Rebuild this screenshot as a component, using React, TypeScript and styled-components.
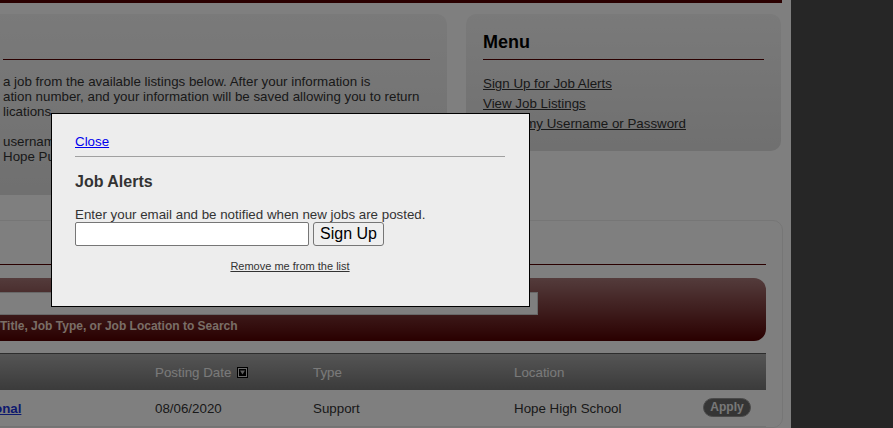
import React from "react";
import styled, { createGlobalStyle } from "styled-components";

const GlobalStyle = createGlobalStyle`
  html, body {
    margin: 0;
    padding: 0;
  }
  body {
    background: #4c4c4c;
    font-family: "Liberation Sans", Arial, sans-serif;
    font-size: 13.33px;
    color: #333;
    height: 428px;
    overflow: hidden;
  }
`;

const Site = styled.div`
  width: 791px;
  height: 428px;
  background: #fff;
  overflow: hidden;
`;

const TopBar = styled.div`
  height: 3px;
  margin-right: 9px;
  background: #540000;
`;

const Columns = styled.div`
  display: flex;
  align-items: flex-start;
  gap: 19px;
  margin: 11px 10px 0 -14px;
`;

const Panel = styled.section<{ $width: number; $bottom: number }>`
  box-sizing: border-box;
  width: ${(p) => p.$width}px;
  padding: 18px 17px ${(p) => p.$bottom}px;
  border-radius: 10px;
  background: linear-gradient(#f4f4f4, #e0e0e0);
`;

const PanelTitle = styled.h2`
  height: 21px;
  margin: 0;
  padding-bottom: 6px;
  border-bottom: 1px solid #550000;
  font-size: 18px;
  line-height: 21px;
  font-weight: bold;
  color: #000;
`;

const Intro = styled.p`
  margin: 14px 0 0;
  line-height: 15px;
  white-space: nowrap;
  & + & {
    margin-top: 15px;
  }
`;

const MenuList = styled.ul`
  list-style: none;
  margin: 14px 0 0;
  padding: 0;
  line-height: 20px;
  a {
    color: #333;
    text-decoration: underline;
  }
`;

const ListingsPanel = styled.section`
  margin: 25px 8px 0 -14px;
  padding: 0 16px 0 0;
  border: 1px solid #ececec;
  border-radius: 10px;
  background: #fff;
`;

const ListingsHeader = styled.div`
  height: 43px;
  border-bottom: 1px solid #550000;
`;

const SearchBar = styled.div`
  margin-top: 13px;
  height: 63px;
  box-sizing: border-box;
  padding: 14px 0 0 3px;
  border-radius: 12px;
  background: linear-gradient(#a87878, #540000);
`;

const SearchInput = styled.input`
  display: block;
  box-sizing: border-box;
  width: 548px;
  height: 23px;
  border: 1px solid #d0d0d0;
  background: #fff;
`;

const SearchHint = styled.div`
  margin-top: 4px;
  padding-left: 10px;
  font-size: 12px;
  line-height: 14px;
  font-weight: bold;
  color: #f2dccd;
  white-space: nowrap;
`;

const Grid = styled.div`
  display: grid;
  grid-template-columns: 168px 158px 201px 189px 1fr;
  align-items: center;
  height: 36px;
  & > :first-child {
    padding-left: 7px;
  }
`;

const TableHead = styled(Grid)`
  margin-top: 12px;
  border-top: 1px solid #5a5a5a;
  background: linear-gradient(#aaaaaa, #767676);
  color: #f4f4f4;
`;

const TableRow = styled(Grid)`
  border-bottom: 1px solid #e6e6e6;
  color: #333;
`;

const HeadCell = styled.div`
  display: flex;
  align-items: center;
  gap: 6px;
  white-space: nowrap;
`;

const JobLink = styled.a`
  font-weight: bold;
  color: #1a33dd;
  text-decoration: underline;
  white-space: nowrap;
`;

const ApplyButton = styled.button`
  width: 48px;
  height: 19px;
  padding: 0;
  border: 1px solid #949494;
  border-radius: 10px;
  background: #6a6a6a;
  color: #f0f0f0;
  font-family: "Liberation Sans", Arial, sans-serif;
  font-size: 12px;
  font-weight: bold;
  margin-top: -3px;
`;

const Overlay = styled.div`
  position: fixed;
  inset: 0;
  background: rgba(0, 0, 0, 0.5);
`;

const Modal = styled.div`
  position: fixed;
  left: 51px;
  top: 113px;
  width: 479px;
  height: 194px;
  box-sizing: border-box;
  padding: 20px 24px 0 23px;
  border: 1px solid #000;
  background: #ededed;
  color: #333;
  font-size: 13.33px;
`;

const CloseLink = styled.a`
  color: #0000ee;
  text-decoration: underline;
`;

const Rule = styled.div`
  height: 1px;
  margin-top: 7px;
  background: #a0a0a0;
`;

const ModalTitle = styled.h3`
  margin: 16px 0 0;
  font-size: 16px;
  font-weight: bold;
  line-height: normal;
`;

const ModalText = styled.p`
  margin: 16px 0 0;
`;

const SignUpForm = styled.form`
  display: flex;
  gap: 4px;
`;

const EmailInput = styled.input`
  box-sizing: border-box;
  width: 234px;
  height: 24px;
  border: 1px solid #767676;
  border-radius: 2px;
  background: #fff;
`;

const SignUpButton = styled.button`
  box-sizing: border-box;
  height: 24px;
  padding: 0 6px;
  border: 1px solid #767676;
  border-radius: 3px;
  background: #efefef;
  color: #000;
  font-family: "Liberation Sans", Arial, sans-serif;
  font-size: 16px;
`;

const RemoveLink = styled.a`
  display: block;
  margin-top: 14px;
  text-align: center;
  font-size: 11px;
  color: #333;
  text-decoration: underline;
`;

function SortIcon() {
  return (
    <svg width="11" height="11" viewBox="0 0 11 11">
      <rect x="0.5" y="0.5" width="10" height="10" fill="#d4d4d4" stroke="#000" />
      <rect x="2" y="2" width="7" height="7" fill="#000" />
      <path d="M3 3.5h5L5.5 7.5z" fill="#bbb" />
    </svg>
  );
}

const menu = ["Sign Up for Job Alerts", "View Job Listings", "Forgot my Username or Password"];

export default function App() {
  return (
    <>
      <GlobalStyle />
      <Site>
        <TopBar />
        <Columns>
          <Panel $width={461} $bottom={31}>
            <PanelTitle />
            <Intro>
              a job from the available listings below. After your information is
              <br />
              ation number, and your information will be saved allowing you to return
              <br />
              lications.
            </Intro>
            <Intro>
              usernam
              <br />
              Hope Pu
            </Intro>
          </Panel>
          <Panel $width={315} $bottom={17}>
            <PanelTitle>Menu</PanelTitle>
            <MenuList>
              {menu.map((item) => (
                <li key={item}>
                  <a href="#">{item}</a>
                </li>
              ))}
            </MenuList>
          </Panel>
        </Columns>
        <ListingsPanel>
          <ListingsHeader />
          <SearchBar>
            <SearchInput type="text" />
            <SearchHint>Title, Job Type, or Job Location to Search</SearchHint>
          </SearchBar>
          <TableHead>
            <HeadCell />
            <HeadCell>
              Posting Date <SortIcon />
            </HeadCell>
            <HeadCell>Type</HeadCell>
            <HeadCell>Location</HeadCell>
            <HeadCell />
          </TableHead>
          <TableRow>
            <div>
              <JobLink href="#">onal</JobLink>
            </div>
            <div>08/06/2020</div>
            <div>Support</div>
            <div>Hope High School</div>
            <div>
              <ApplyButton>Apply</ApplyButton>
            </div>
          </TableRow>
        </ListingsPanel>
      </Site>
      <Overlay />
      <Modal>
        <div>
          <CloseLink href="#">Close</CloseLink>
        </div>
        <Rule />
        <ModalTitle>Job Alerts</ModalTitle>
        <ModalText>Enter your email and be notified when new jobs are posted.</ModalText>
        <SignUpForm onSubmit={(e) => e.preventDefault()}>
          <EmailInput type="text" />
          <SignUpButton type="submit">Sign Up</SignUpButton>
        </SignUpForm>
        <RemoveLink href="#">Remove me from the list</RemoveLink>
      </Modal>
    </>
  );
}
